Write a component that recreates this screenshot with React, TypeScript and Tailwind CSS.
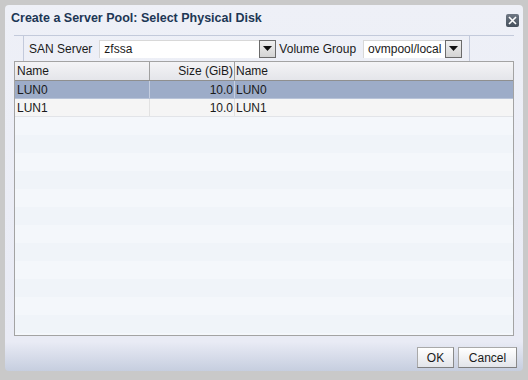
import React from 'react';

const rows = [
  { name: 'LUN0', size: '10.0', vol: 'LUN0', selected: true },
  { name: 'LUN1', size: '10.0', vol: 'LUN1', selected: false },
];

function DropButton() {
  return (
    <div className="w-[17px] h-[18px] border border-[#6b6b6b] bg-gradient-to-b from-[#f0f0f0] to-[#d4d4d4] flex items-center justify-center">
      <svg width="9" height="5" viewBox="0 0 9 5">
        <path d="M0 0h9L4.5 5z" fill="#111" />
      </svg>
    </div>
  );
}

export default function App() {
  const emptyRows = Array.from({ length: 12 });

  return (
    <div
      className="w-[528px] h-[380px] bg-[#c9c9c9] pt-[5px] pl-[5px] overflow-hidden"
      style={{ fontFamily: '"Liberation Sans", Arial, sans-serif' }}
    >
      <div className="w-[518px] h-[366px] rounded-[4px] bg-gradient-to-b from-[#eef0f7] via-[#e9ebf5] via-[92%] to-[#c6cedf] flex flex-col">
        {/* Title */}
        <div className="h-[25px] flex items-center justify-between pl-[6px] pr-[4px] pt-[1px]">
          <span className="text-[12.5px] font-bold text-[#1d3755]">Create a Server Pool: Select Physical Disk</span>
          <div className="w-[13px] h-[13px] mt-[4px] rounded-[2px] bg-gradient-to-b from-[#6f7884] to-[#46505c] flex items-center justify-center">
            <svg width="9" height="9" viewBox="0 0 9 9">
              <path d="M1 1L8 8M8 1L1 8" stroke="#fff" strokeWidth="1.6" />
            </svg>
          </div>
        </div>

        <div className="pl-[9px] pr-[9px] mt-[5px]">
          {/* Toolbar */}
          <div className="border-t border-[#c3cadb] h-[26px] flex items-center text-[12px] text-[#1a1a1a]">
            <div className="w-[10px] h-full border-r border-[#c3cadb]" />
            <span className="ml-[5px]">SAN Server</span>
            <div className="ml-[7px] flex items-center">
              <div className="w-[160px] h-[18px] bg-white border-t border-l border-[#d8d8d8] pl-[4px] flex items-center">zfssa</div>
              <DropButton />
            </div>
            <span className="ml-[3px]">Volume Group</span>
            <div className="ml-[7px] flex items-center">
              <div className="w-[82px] h-[18px] bg-white border-t border-l border-[#d8d8d8] pl-[4px] flex items-center overflow-hidden whitespace-nowrap">ovmpool/local</div>
              <DropButton />
            </div>
            <div className="ml-[7px] w-px h-full bg-[#c3cadb]" />
          </div>

          {/* Table */}
          <div className="w-[500px] h-[275px] border border-[#a3a3a3] bg-[#f4f7fb] overflow-hidden text-[12px] text-[#1a1a1a]">
            <div className="h-[19px] flex bg-gradient-to-b from-[#f4f4f6] to-[#e4e5ea] border-b border-[#8f8f8f]">
              <div className="w-[135px] border-r border-[#a0a0a0] pl-[2px] flex items-center">Name</div>
              <div className="w-[85px] border-r border-[#a0a0a0] pr-[1px] flex items-center justify-end">Size (GiB)</div>
              <div className="flex-1 pl-[1px] flex items-center">Name</div>
            </div>
            {rows.map((r) => (
              <div
                key={r.name}
                className={`h-[18px] flex border-b ${r.selected ? 'bg-[#9dacc8] border-[#b8c3d8]' : 'bg-[#f5f5f5] border-[#e2e4e8]'}`}
              >
                <div className={`w-[135px] border-r pl-[2px] flex items-center ${r.selected ? 'border-[#c5cee0]' : 'border-[#e2e2e2]'}`}>{r.name}</div>
                <div className={`w-[85px] border-r pr-[1px] flex items-center justify-end ${r.selected ? 'border-[#c5cee0]' : 'border-[#e2e2e2]'}`}>{r.size}</div>
                <div className="flex-1 pl-[1px] flex items-center">{r.vol}</div>
              </div>
            ))}
            {emptyRows.map((_, i) => (
              <div key={i} className={`h-[18px] ${i % 2 === 0 ? 'bg-[#f4f7fb]' : 'bg-[#f0f4f9]'}`} />
            ))}
          </div>
        </div>

        {/* Buttons */}
        <div className="flex justify-end gap-[4px] pr-[6px] mt-[11px] text-[12px] text-[#1a1a1a]">
          <button className="w-[37px] h-[21px] border border-[#a9a9a9] border-b-[#7f7f7f] border-r-[#8a8a8a] bg-gradient-to-b from-white to-[#e3e5ea]">OK</button>
          <button className="w-[59px] h-[21px] border border-[#a9a9a9] border-b-[#7f7f7f] border-r-[#8a8a8a] bg-gradient-to-b from-white to-[#e3e5ea]">Cancel</button>
        </div>
      </div>
    </div>
  );
}
